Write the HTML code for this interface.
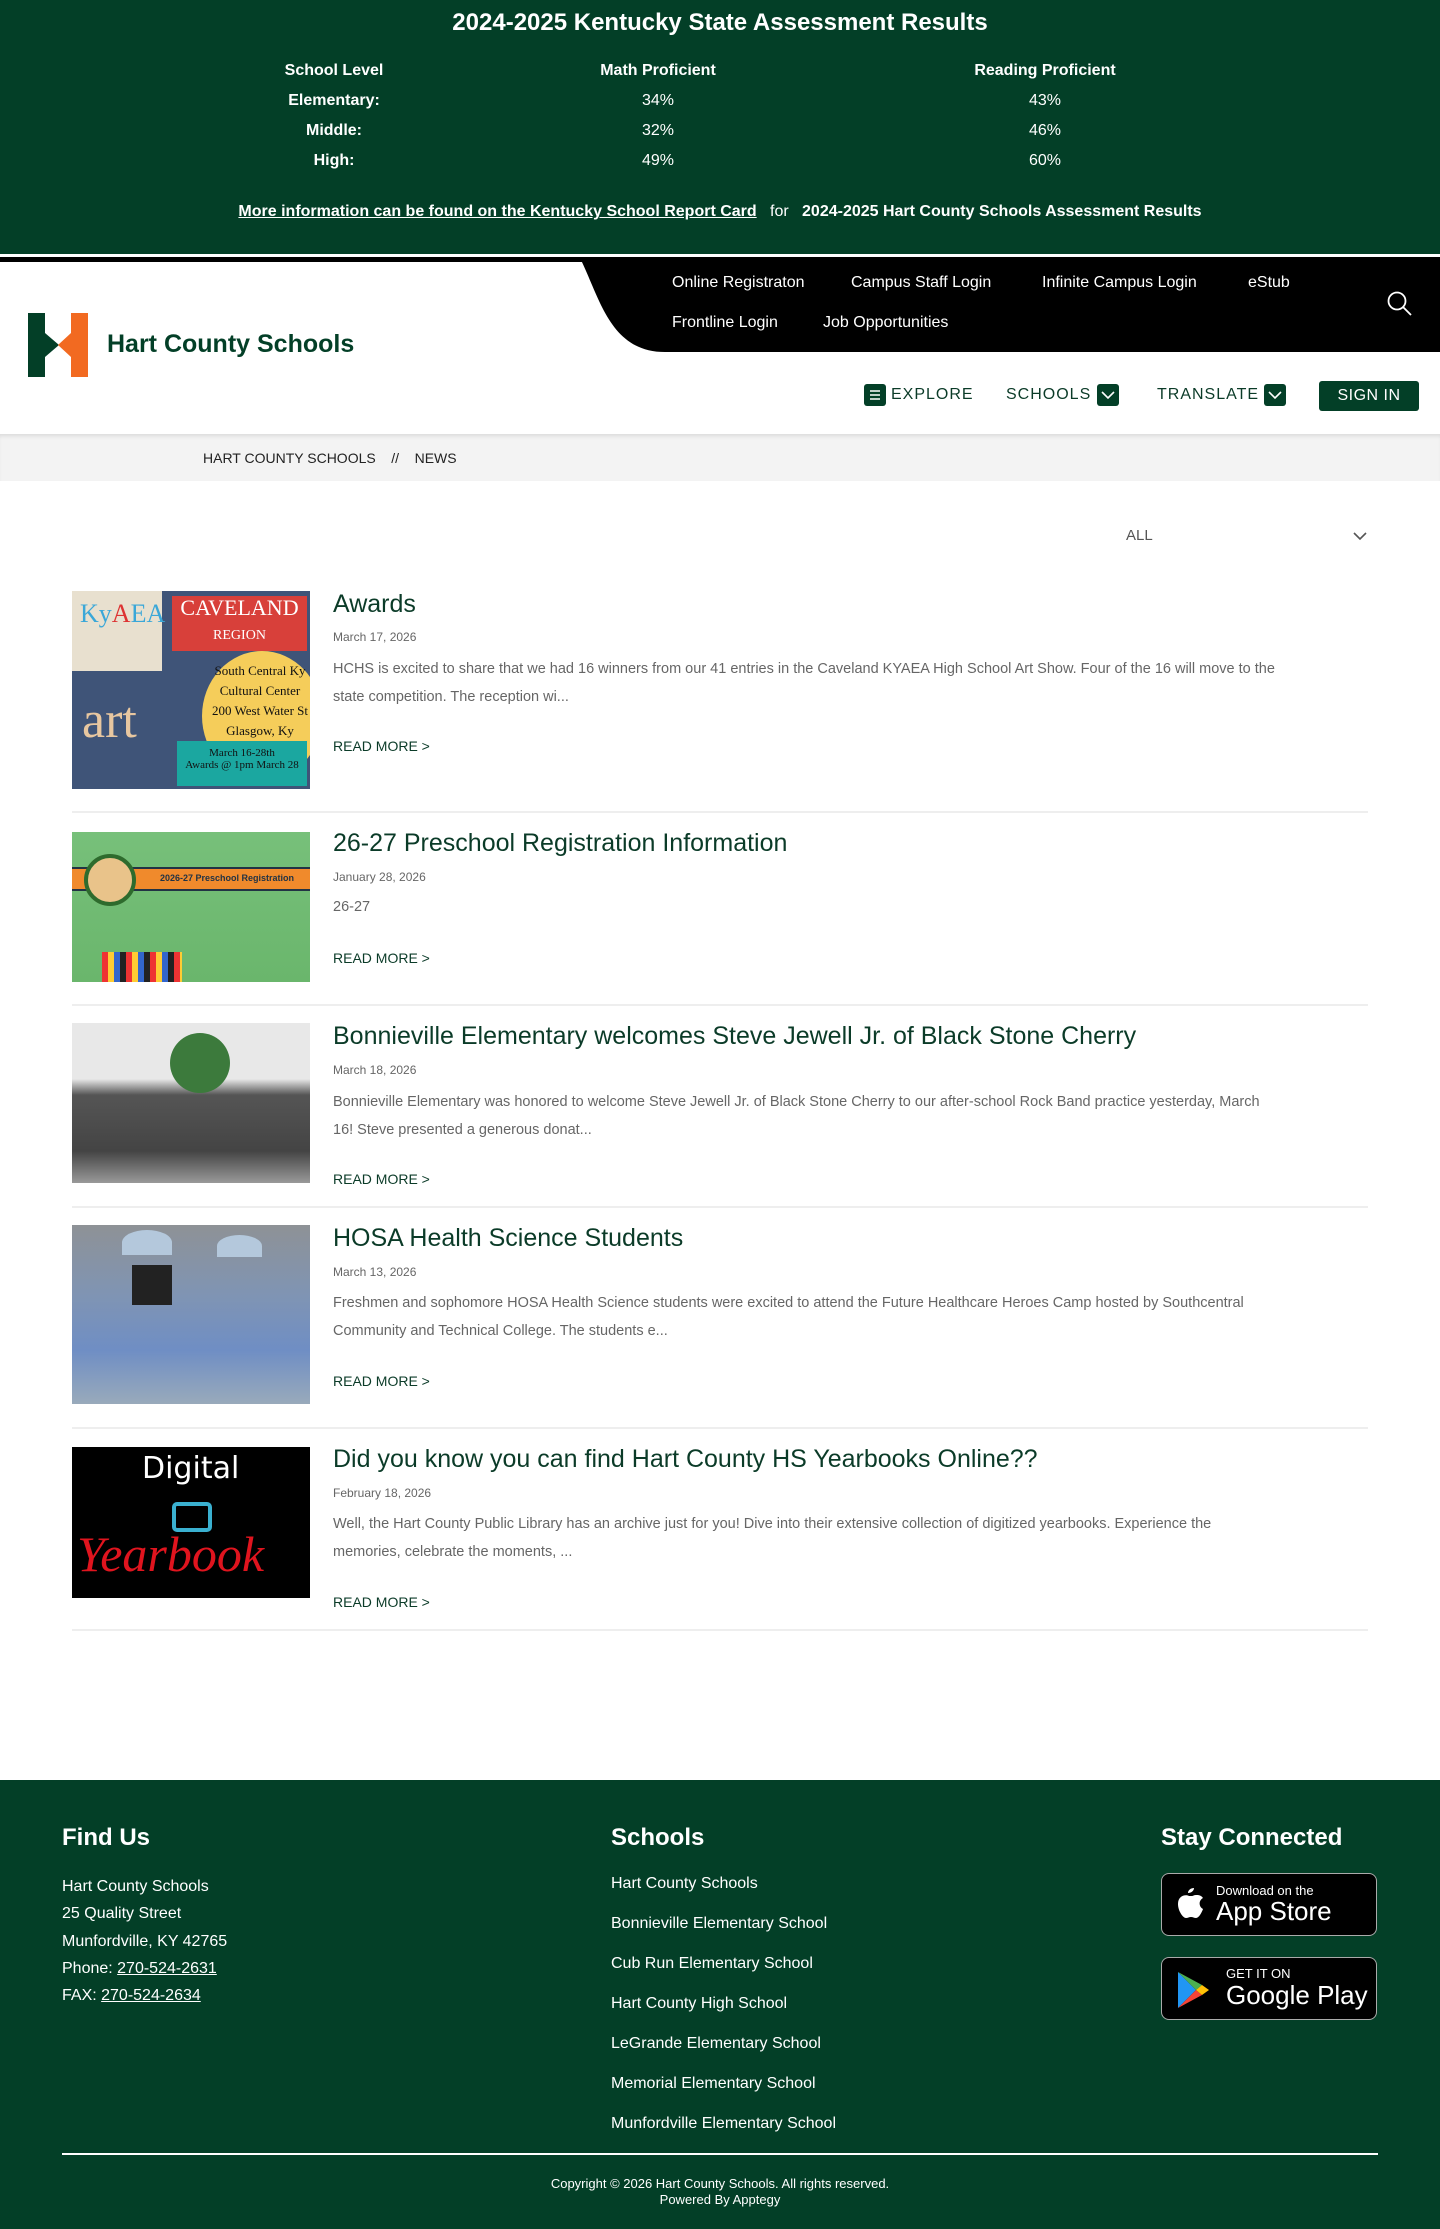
<!DOCTYPE html>
<html><head><meta charset="utf-8"><style>
*{margin:0;padding:0;box-sizing:border-box}
body{width:1440px;height:2229px;position:relative;font-family:"Liberation Sans",sans-serif;background:#fff;overflow:hidden}
.a{position:absolute;white-space:nowrap}
.g{background:#033f27}
.w{color:#fff}
.c{transform:translateX(-50%)}
.t{font-size:25px;color:#0b3b28}
.d{font-size:12px;color:#666}
.x{font-size:14.5px;color:#666}
.r{font-size:14px;color:#0b3b28}
.sep{position:absolute;left:72px;width:1296px;height:2px;background:#eee}
.img{position:absolute;left:72px;width:238px;overflow:hidden}
.nav{font-size:16px;color:#fff}
.n2{font-size:16px;color:#0b3b28;letter-spacing:1px}
.bx{position:absolute;width:22px;height:22px;background:#033f27;border-radius:3px}
.fl{font-size:16px;color:#fff}
</style></head><body>
<div class="a g" style="left:0;top:0;width:1440px;height:254px"></div>
<div class="a w c" style="left:720px;top:9px;font-size:24px;font-weight:bold">2024-2025 Kentucky State Assessment Results</div>
<div class="a w c" style="left:334px;top:62px;font-size:16px;font-weight:bold">School Level</div>
<div class="a w c" style="left:658px;top:62px;font-size:16px;font-weight:bold">Math Proficient</div>
<div class="a w c" style="left:1045px;top:62px;font-size:16px;font-weight:bold">Reading Proficient</div>
<div class="a w c" style="left:334px;top:92px;font-size:16px;font-weight:bold">Elementary:</div>
<div class="a w c" style="left:658px;top:92px;font-size:16px">34%</div>
<div class="a w c" style="left:1045px;top:92px;font-size:16px">43%</div>
<div class="a w c" style="left:334px;top:122px;font-size:16px;font-weight:bold">Middle:</div>
<div class="a w c" style="left:658px;top:122px;font-size:16px">32%</div>
<div class="a w c" style="left:1045px;top:122px;font-size:16px">46%</div>
<div class="a w c" style="left:334px;top:152px;font-size:16px;font-weight:bold">High:</div>
<div class="a w c" style="left:658px;top:152px;font-size:16px">49%</div>
<div class="a w c" style="left:1045px;top:152px;font-size:16px">60%</div>
<div class="a w c" style="left:720px;top:203px;font-size:16px"><b style="text-decoration:underline">More information can be found on the Kentucky School Report Card</b> &nbsp; for &nbsp; <b>2024-2025 Hart County Schools Assessment Results</b></div>

<div class="a" style="left:0;top:257px;width:1440px;height:5px;background:#000"></div>
<svg class="a" style="left:570px;top:258px" width="870" height="95"><path d="M10 0 H870 V94 H95 C40 94 30 40 10 0Z" fill="#000"/></svg>
<div class="a nav" style="left:672px;top:274px">Online Registraton</div>
<div class="a nav" style="left:851px;top:274px">Campus Staff Login</div>
<div class="a nav" style="left:1042px;top:274px">Infinite Campus Login</div>
<div class="a nav" style="left:1248px;top:274px">eStub</div>
<div class="a nav" style="left:672px;top:314px">Frontline Login</div>
<div class="a nav" style="left:823px;top:314px">Job Opportunities</div>
<svg class="a" style="left:1386px;top:290px" width="28" height="28"><circle cx="11" cy="11" r="8.5" fill="none" stroke="#fff" stroke-width="1.8"/><path d="M17 17 L25 25" stroke="#fff" stroke-width="1.8"/></svg>

<svg class="a" style="left:28px;top:313px" width="60" height="64"><rect x="0" y="0" width="17" height="64" fill="#033f27"/><rect x="43" y="0" width="17" height="64" fill="#f26a21"/><path d="M17 20 L31 32 L17 44Z" fill="#033f27"/><path d="M43 20 L30 32 L43 44Z" fill="#f26a21"/></svg>
<div class="a" style="left:107px;top:330px;font-size:25px;font-weight:bold;color:#033f27">Hart County Schools</div>

<div class="bx" style="left:864px;top:384px"><svg width="22" height="22"><path d="M6 7H16M6 11H16M6 15H16" stroke="#fff" stroke-width="1.5"/></svg></div>
<div class="a n2" style="left:891px;top:386px">EXPLORE</div>
<div class="a n2" style="left:1006px;top:386px">SCHOOLS</div>
<div class="bx" style="left:1097px;top:384px"><svg width="22" height="22"><path d="M5 8L11 14L17 8" stroke="#fff" stroke-width="1.6" fill="none"/></svg></div>
<div class="a n2" style="left:1157px;top:386px">TRANSLATE</div>
<div class="bx" style="left:1264px;top:384px"><svg width="22" height="22"><path d="M5 8L11 14L17 8" stroke="#fff" stroke-width="1.6" fill="none"/></svg></div>
<div class="a g" style="left:1319px;top:381px;width:100px;height:30px;border-radius:3px;color:#fff;font-size:16px;text-align:center;line-height:30px;letter-spacing:0.5px">SIGN IN</div>

<div class="a" style="left:0;top:434px;width:1440px;height:47px;background:#f3f3f3;box-shadow:inset 0 4px 4px -2px rgba(0,0,0,.1)"></div>
<div class="a" style="left:203px;top:450px;font-size:14px;color:#222">HART COUNTY SCHOOLS &nbsp;&nbsp; // &nbsp;&nbsp; NEWS</div>

<div class="a" style="left:1126px;top:527px;font-size:15px;color:#555">ALL</div>
<svg class="a" style="left:1352px;top:530px" width="16" height="12"><path d="M2 3L8 9L14 3" stroke="#555" stroke-width="1.6" fill="none"/></svg>

<!-- article 1 -->
<div class="img" style="top:591px;height:198px;background:#3f5478">
<div class="a" style="left:0;top:0;width:90px;height:80px;background:#e8e0cf"></div>
<div class="a" style="left:8px;top:8px;font-size:26px;color:#3aa7d8;font-family:'Liberation Serif'">Ky<span style="color:#d33">A</span>EA</div>
<div class="a" style="left:100px;top:5px;width:135px;height:55px;background:#d8403a;color:#fff;font-family:'Liberation Serif';font-size:22px;text-align:center;line-height:24px">CAVELAND<br><span style="font-size:14px">REGION</span></div>
<div class="a" style="left:130px;top:60px;width:120px;height:130px;border-radius:50%;background:#f5cd5a"></div>
<div class="a" style="left:140px;top:70px;font-family:'Liberation Serif';font-size:13px;line-height:20px;color:#111;text-align:center">South Central Ky<br>Cultural Center<br>200 West Water St<br>Glasgow, Ky</div>
<div class="a" style="left:10px;top:100px;font-family:'Liberation Serif';font-size:52px;color:#e8c7a0">art</div>
<div class="a" style="left:105px;top:150px;width:130px;height:45px;background:#1ba7a0;color:#111;font-size:11px;font-family:'Liberation Serif';text-align:center;padding-top:6px">March 16-28th<br>Awards @ 1pm March 28</div>
</div>
<div class="a t" style="left:333px;top:590px">Awards</div>
<div class="a d" style="left:333px;top:630px">March 17, 2026</div>
<div class="a x" style="left:333px;top:655px;line-height:28px">HCHS is excited to share that we had 16 winners from our 41 entries in the Caveland KYAEA High School Art Show. Four of the 16 will move to the<br>state competition. The reception wi...</div>
<div class="a r" style="left:333px;top:738px">READ MORE &gt;</div>
<div class="sep" style="top:811px"></div>

<!-- article 2 -->
<div class="img" style="top:832px;height:150px;background:linear-gradient(#77c07a,#6ab66c)">
<div class="a" style="left:0;top:35px;width:238px;height:24px;background:#f08a2c;border-top:2px solid #234;border-bottom:2px solid #234"></div>
<div class="a" style="left:12px;top:22px;width:52px;height:52px;border-radius:50%;background:#e9c38a;border:4px solid #2e6b2d"></div>
<div class="a" style="left:88px;top:41px;font-size:9px;font-weight:bold;color:#234">2026-27 Preschool Registration</div>
<div class="a" style="left:30px;top:120px;width:80px;height:30px;background:repeating-linear-gradient(90deg,#e33 0 6px,#fc3 6px 12px,#36c 12px 18px,#222 18px 24px)"></div>
</div>
<div class="a t" style="left:333px;top:829px">26-27 Preschool Registration Information</div>
<div class="a d" style="left:333px;top:870px">January 28, 2026</div>
<div class="a x" style="left:333px;top:899px">26-27</div>
<div class="a r" style="left:333px;top:950px">READ MORE &gt;</div>
<div class="sep" style="top:1004px"></div>

<!-- article 3 -->
<div class="img" style="top:1023px;height:160px;background:linear-gradient(#e8e8e8 0 35%,#555 45%,#444 80%,#999)">
<div class="a" style="left:98px;top:10px;width:60px;height:60px;border-radius:50%;background:#3c7a3c"></div>
</div>
<div class="a t" style="left:333px;top:1022px">Bonnieville Elementary welcomes Steve Jewell Jr. of Black Stone Cherry</div>
<div class="a d" style="left:333px;top:1063px">March 18, 2026</div>
<div class="a x" style="left:333px;top:1088px;line-height:28px">Bonnieville Elementary was honored to welcome Steve Jewell Jr. of Black Stone Cherry to our after-school Rock Band practice yesterday, March<br>16! Steve presented a generous donat...</div>
<div class="a r" style="left:333px;top:1171px">READ MORE &gt;</div>
<div class="sep" style="top:1206px"></div>

<!-- article 4 -->
<div class="img" style="top:1225px;height:179px;background:linear-gradient(#8e9296,#7f94b4 40%,#6f8ec4 70%,#9ab 100%)">
<div class="a" style="left:50px;top:5px;width:50px;height:25px;border-radius:50% 50% 0 0;background:#b4c8dc"></div>
<div class="a" style="left:145px;top:10px;width:45px;height:22px;border-radius:50% 50% 0 0;background:#b4c8dc"></div>
<div class="a" style="left:60px;top:40px;width:40px;height:40px;background:#222"></div>
</div>
<div class="a t" style="left:333px;top:1224px">HOSA Health Science Students</div>
<div class="a d" style="left:333px;top:1265px">March 13, 2026</div>
<div class="a x" style="left:333px;top:1289px;line-height:28px">Freshmen and sophomore HOSA Health Science students were excited to attend the Future Healthcare Heroes Camp hosted by Southcentral<br>Community and Technical College. The students e...</div>
<div class="a r" style="left:333px;top:1373px">READ MORE &gt;</div>
<div class="sep" style="top:1427px"></div>

<!-- article 5 -->
<div class="img" style="top:1447px;height:151px;background:#000">
<div class="a" style="left:70px;top:4px;font-size:30px;color:#fff;font-family:'DejaVu Sans'">Digital</div>
<div class="a" style="left:100px;top:55px;width:40px;height:30px;border:4px solid #3ab0d0;border-radius:5px"></div>
<div class="a" style="left:5px;top:78px;font-size:50px;color:#e0141e;font-style:italic;font-family:'Liberation Serif'">Yearbook</div>
</div>
<div class="a t" style="left:333px;top:1445px">Did you know you can find Hart County HS Yearbooks Online??</div>
<div class="a d" style="left:333px;top:1486px">February 18, 2026</div>
<div class="a x" style="left:333px;top:1510px;line-height:28px">Well, the Hart County Public Library has an archive just for you! Dive into their extensive collection of digitized yearbooks. Experience the<br>memories, celebrate the moments, ...</div>
<div class="a r" style="left:333px;top:1594px">READ MORE &gt;</div>
<div class="sep" style="top:1629px"></div>

<!-- footer -->
<div class="a g" style="left:0;top:1780px;width:1440px;height:449px"></div>
<div class="a w" style="left:62px;top:1824px;font-size:24px;font-weight:bold">Find Us</div>
<div class="a w" style="left:611px;top:1824px;font-size:24px;font-weight:bold">Schools</div>
<div class="a w" style="left:1161px;top:1824px;font-size:24px;font-weight:bold">Stay Connected</div>
<div class="a fl" style="left:62px;top:1873px;line-height:27.3px">Hart County Schools<br>25 Quality Street<br>Munfordville, KY 42765<br>Phone: <u>270-524-2631</u><br>FAX: <u>270-524-2634</u></div>
<div class="a fl" style="left:611px;top:1864px;line-height:40px">Hart County Schools<br>Bonnieville Elementary School<br>Cub Run Elementary School<br>Hart County High School<br>LeGrande Elementary School<br>Memorial Elementary School<br>Munfordville Elementary School</div>
<div class="a" style="left:1161px;top:1873px;width:216px;height:63px;background:#000;border:1.5px solid #aaa;border-radius:8px">
<svg class="a" style="left:12px;top:12px" width="30" height="36"><path d="M20 2c-3 0-6 2-6 5 3 0 6-2 6-5zM15 10c-4-2-11 0-11 8 0 7 5 14 8 14 2 0 3-1 5-1s3 1 5 1c3 0 6-6 7-9-4-2-5-8 0-11-2-3-5-3-7-3-2 0-3 1-4 1z" fill="#fff"/></svg>
<div class="a w" style="left:54px;top:9px;font-size:13px">Download on the</div>
<div class="a w" style="left:54px;top:22px;font-size:26px">App Store</div></div>
<div class="a" style="left:1161px;top:1957px;width:216px;height:63px;background:#000;border:1.5px solid #aaa;border-radius:8px">
<svg class="a" style="left:14px;top:13px" width="34" height="38"><path d="M2 1L20 19L2 37Z" fill="#2196f3"/><path d="M2 1L26 14L20 19Z" fill="#4caf50"/><path d="M2 37L26 24L20 19Z" fill="#f44336"/><path d="M26 14L33 19L26 24L20 19Z" fill="#ffc107"/></svg>
<div class="a w" style="left:64px;top:8px;font-size:13px">GET IT ON</div>
<div class="a w" style="left:64px;top:22px;font-size:26px">Google Play</div></div>
<div class="a" style="left:62px;top:2153px;width:1316px;height:2px;background:#fff"></div>
<div class="a w c" style="left:720px;top:2176px;font-size:13px">Copyright © 2026 Hart County Schools. All rights reserved.</div>
<div class="a w c" style="left:720px;top:2192px;font-size:13px">Powered By Apptegy</div>
</body></html>
